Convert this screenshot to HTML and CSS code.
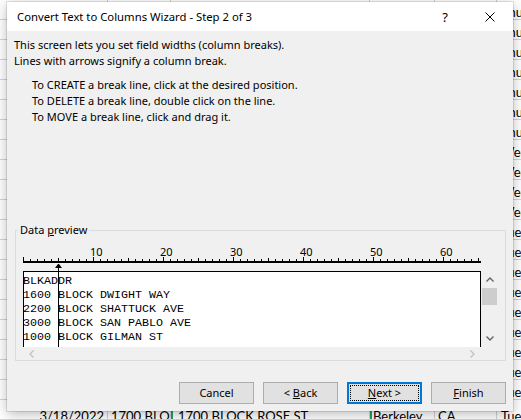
FILE: index.html
```html
<!DOCTYPE html>
<html lang="en">
<head>
<meta charset="utf-8">
<title>Convert Text to Columns Wizard - Step 2 of 3</title>
<link rel="stylesheet" href="styles.css">
</head>
<body>
<div class="sheet">
  <div class="row"><div class="cell ca"></div><div class="cell cb"></div><div class="cell cc"></div><div class="cell cd"></div><div class="cell ce"></div><div class="cell cf">Thu</div></div>
  <div class="row"><div class="cell ca"></div><div class="cell cb"></div><div class="cell cc"></div><div class="cell cd"></div><div class="cell ce"></div><div class="cell cf">Thu</div></div>
  <div class="row"><div class="cell ca"></div><div class="cell cb"></div><div class="cell cc"></div><div class="cell cd"></div><div class="cell ce"></div><div class="cell cf">Thu</div></div>
  <div class="row"><div class="cell ca"></div><div class="cell cb"></div><div class="cell cc"></div><div class="cell cd"></div><div class="cell ce"></div><div class="cell cf">Thu</div></div>
  <div class="row"><div class="cell ca"></div><div class="cell cb"></div><div class="cell cc"></div><div class="cell cd"></div><div class="cell ce"></div><div class="cell cf">Thu</div></div>
  <div class="row"><div class="cell ca"></div><div class="cell cb"></div><div class="cell cc"></div><div class="cell cd"></div><div class="cell ce"></div><div class="cell cf">Thu</div></div>
  <div class="row"><div class="cell ca"></div><div class="cell cb"></div><div class="cell cc"></div><div class="cell cd"></div><div class="cell ce"></div><div class="cell cf">Thu</div></div>
  <div class="row"><div class="cell ca"></div><div class="cell cb"></div><div class="cell cc"></div><div class="cell cd"></div><div class="cell ce"></div><div class="cell cf">Wed</div></div>
  <div class="row"><div class="cell ca"></div><div class="cell cb"></div><div class="cell cc"></div><div class="cell cd"></div><div class="cell ce"></div><div class="cell cf">Wed</div></div>
  <div class="row"><div class="cell ca"></div><div class="cell cb"></div><div class="cell cc"></div><div class="cell cd"></div><div class="cell ce"></div><div class="cell cf">Wed</div></div>
  <div class="row"><div class="cell ca"></div><div class="cell cb"></div><div class="cell cc"></div><div class="cell cd"></div><div class="cell ce"></div><div class="cell cf">Wed</div></div>
  <div class="row"><div class="cell ca"></div><div class="cell cb"></div><div class="cell cc"></div><div class="cell cd"></div><div class="cell ce"></div><div class="cell cf">Tue</div></div>
  <div class="row"><div class="cell ca"></div><div class="cell cb"></div><div class="cell cc"></div><div class="cell cd"></div><div class="cell ce"></div><div class="cell cf">Tue</div></div>
  <div class="row"><div class="cell ca"></div><div class="cell cb"></div><div class="cell cc"></div><div class="cell cd"></div><div class="cell ce"></div><div class="cell cf">Tue</div></div>
  <div class="row"><div class="cell ca"></div><div class="cell cb"></div><div class="cell cc"></div><div class="cell cd"></div><div class="cell ce"></div><div class="cell cf">Tue</div></div>
  <div class="row"><div class="cell ca"></div><div class="cell cb"></div><div class="cell cc"></div><div class="cell cd"></div><div class="cell ce"></div><div class="cell cf">Tue</div></div>
  <div class="row"><div class="cell ca"></div><div class="cell cb"></div><div class="cell cc"></div><div class="cell cd"></div><div class="cell ce"></div><div class="cell cf">Tue</div></div>
  <div class="row"><div class="cell ca"></div><div class="cell cb"></div><div class="cell cc"></div><div class="cell cd"></div><div class="cell ce"></div><div class="cell cf">Tue</div></div>
  <div class="row"><div class="cell ca"></div><div class="cell cb"></div><div class="cell cc"></div><div class="cell cd"></div><div class="cell ce"></div><div class="cell cf">Tue</div></div>
  <div class="row"><div class="cell ca"></div><div class="cell cb"></div><div class="cell cc"></div><div class="cell cd"></div><div class="cell ce"></div><div class="cell cf">Tue</div></div>
  <div class="row last"><div class="cell ca">3/18/2022</div><div class="cell cb">1700 BLOC</div><div class="cell cc flag">1700 BLOCK ROSE ST</div><div class="cell cd flag">Berkeley</div><div class="cell ce">CA</div><div class="cell cf">Tue</div></div>
</div>

<div class="dialog">
  <div class="titlebar">
    <span class="title">Convert Text to Columns Wizard - Step 2 of 3</span>
    <span class="help">?</span>
    <span class="close"><svg width="10" height="10" viewBox="0 0 10 10"><path d="M0.5 0.5 L9.5 9.5 M9.5 0.5 L0.5 9.5" stroke="#000" stroke-width="1" fill="none"/></svg></span>
  </div>
  <div class="body">
    <p class="intro">This screen lets you set field widths (column breaks).<br>Lines with arrows signify a column break.</p>
    <ul class="steps">
      <li>To CREATE a break line, click at the desired position.</li>
      <li>To DELETE a break line, double click on the line.</li>
      <li>To MOVE a break line, click and drag it.</li>
    </ul>
    <fieldset class="group">
      <legend>Data <u>p</u>review</legend>
      <div class="preview-wrap">
        <div class="ruler">
          <div class="nums"><span>10</span><span>20</span><span>30</span><span>40</span><span>50</span><span>60</span></div>
          <div class="ticks"></div>
          <div class="baseline"></div>
          <div class="arrow-space"></div>
        </div>
        <div class="listbox">
          <div class="list-col">
            <div class="list"><pre>BLKADDR
1600 BLOCK DWIGHT WAY
2200 BLOCK SHATTUCK AVE
3000 BLOCK SAN PABLO AVE
1000 BLOCK GILMAN ST</pre></div>
            <div class="hscroll">
              <svg width="5" height="8" viewBox="0 0 5 8"><polyline points="4.5,0.5 1,4 4.5,7.5" fill="none" stroke="#c2c2c2" stroke-width="1.3"/></svg>
              <svg width="5" height="8" viewBox="0 0 5 8"><polyline points="0.5,0.5 4,4 0.5,7.5" fill="none" stroke="#c2c2c2" stroke-width="1.3"/></svg>
            </div>
          </div>
          <div class="vscroll">
            <div class="sbtn"><svg width="8" height="5" viewBox="0 0 8 5"><polyline points="0.5,4.5 4,1 7.5,4.5" fill="none" stroke="#606060" stroke-width="1.3"/></svg></div>
            <div class="thumb"></div>
            <div class="track"></div>
            <div class="sbtn"><svg width="8" height="5" viewBox="0 0 8 5"><polyline points="0.5,0.5 4,4 7.5,0.5" fill="none" stroke="#606060" stroke-width="1.3"/></svg></div>
          </div>
        </div>
        <div class="break"></div>
      </div>
    </fieldset>
    <div class="buttons">
      <button class="btn">Cancel</button>
      <button class="btn">&lt; <u>B</u>ack</button>
      <button class="btn default"><u>N</u>ext &gt;</button>
      <button class="btn"><u>F</u>inish</button>
    </div>
  </div>
</div>
</body>
</html>
```

FILE: styles.css
```css
* { box-sizing: border-box; }
html, body { margin: 0; padding: 0; }
body {
  width: 521px;
  height: 420px;
  overflow: hidden;
  background: #fff;
  position: relative;
  font-family: "Noto Sans", sans-serif;
}

/* spreadsheet behind the dialog */
.sheet {
  font-family: Lato, "Liberation Sans", sans-serif;
  font-size: 13px;
  color: #000;
}
.row {
  display: flex;
  height: 20px;
  border-bottom: 1px solid #d4d4d4;
}
.cell {
  flex: none;
  height: 19px;
  padding: 5px 3px 0;
  line-height: 15px;
  white-space: nowrap;
  overflow: hidden;
  border-right: 1px solid #d4d4d4;
}
.row.last .cell { padding-top: 9px; }
.ca { width: 108px; text-align: right; }
.cb { width: 63px; }
.cc { width: 199px; padding-left: 7px; }
.cd { width: 65px; }
.ce { width: 62px; }
.cf { width: 100px; border-right: none; padding-left: 4px; }
.flag { box-shadow: inset 2px 0 #21a366; }

/* dialog window */
.dialog {
  position: absolute;
  left: 7px;
  top: 2px;
  width: 506px;
  height: 409px;
  background: #f0f0f0;
  box-shadow: 0 0 0 1px rgba(0, 0, 0, 0.10), 0 3px 12px rgba(0, 0, 0, 0.28);
  display: flex;
  flex-direction: column;
  font-size: 11px;
  color: #000;
}
.titlebar {
  height: 29px;
  flex: none;
  background: #fff;
  display: flex;
  align-items: center;
  padding-left: 10px;
}
.title { flex: 1; font-size: 11.3px; white-space: nowrap; }
.help {
  width: 20px;
  margin-right: 12px;
  text-align: center;
  font-size: 13px;
}
.close {
  width: 46px;
  height: 29px;
  display: flex;
  align-items: center;
  justify-content: center;
}
.close svg { display: block; }

.body {
  flex: 1;
  padding: 6px 7px 7px;
  display: flex;
  flex-direction: column;
}
.intro { margin: 0; line-height: 16px; }
.steps {
  margin: 8px 0 0;
  padding-left: 18px;
  list-style: none;
  line-height: 16px;
}

.group {
  margin: 97px 0 0 1px;
  padding: 0;
  border: 1px solid #dcdcdc;
  min-width: 0;
}
.group legend {
  margin-left: 2px;
  padding: 0 2px;
  line-height: 16px;
}
.preview-wrap {
  position: relative;
  margin: 9px 0 0 7px;
  width: 475px;
}
.ruler { width: 458px; }
.nums {
  display: flex;
  height: 10px;
  line-height: 10px;
  padding-left: 67px;
  font-size: 11px;
}
.nums span { flex: none; width: 70px; }
.ticks {
  height: 4px;
  background-image:
    repeating-linear-gradient(to right, #000 0 1px, transparent 1px 70px),
    repeating-linear-gradient(to right, #000 0 1px, transparent 1px 35px),
    repeating-linear-gradient(to right, #000 0 1px, transparent 1px 7px);
  background-size: 100% 4px, 100% 3px, 100% 2px;
  background-position: left bottom;
  background-repeat: no-repeat;
}
.baseline { height: 2px; background: #000; }
.arrow-space { height: 8px; }

.listbox { display: flex; }
.list-col { width: 458px; flex: none; }
.list {
  height: 76px;
  background: #fff;
  border: 1px solid #000;
  border-bottom: none;
  padding-top: 2px;
  overflow: hidden;
}
.list pre {
  margin: 0 0 0 -1px;
  font-family: "Liberation Mono", monospace;
  font-size: 11.67px;
  line-height: 14px;
  color: #000;
}
.hscroll {
  height: 13px;
  display: flex;
  justify-content: space-between;
  align-items: center;
  padding: 0 6px 0 6px;
}
.hscroll svg { display: block; }
.vscroll {
  width: 17px;
  height: 76px;
  display: flex;
  flex-direction: column;
  align-items: center;
}
.sbtn {
  height: 17px;
  width: 17px;
  display: flex;
  align-items: center;
  justify-content: center;
}
.sbtn svg { display: block; }
.thumb { width: 15px; height: 17px; background: #cdcdcd; }
.track { flex: 1; }

.break {
  position: absolute;
  left: 32px;
  top: 17px;
  width: 7px;
  height: 83px;
}
.break::before {
  content: "";
  position: absolute;
  left: 0;
  top: 0;
  width: 1px;
  height: 0;
  border-left: 3px solid transparent;
  border-right: 3px solid transparent;
  border-bottom: 4px solid #000;
  box-sizing: content-box;
}
.break::after {
  content: "";
  position: absolute;
  left: 3px;
  top: 3px;
  bottom: 0;
  width: 1px;
  background: #000;
}

.buttons {
  display: flex;
  justify-content: flex-end;
  gap: 9px;
  margin-top: 21px;
}
.btn {
  width: 75px;
  height: 22px;
  margin: 0;
  padding: 0;
  background: #e1e1e1;
  border: 1px solid #adadad;
  border-radius: 0;
  font-family: "Noto Sans", sans-serif;
  font-size: 11px;
  color: #000;
  line-height: 20px;
  text-align: center;
}
.btn.default {
  border: 2px solid #0078d7;
  outline: 1px dotted #000;
  outline-offset: -4px;
  line-height: 18px;
}
```
